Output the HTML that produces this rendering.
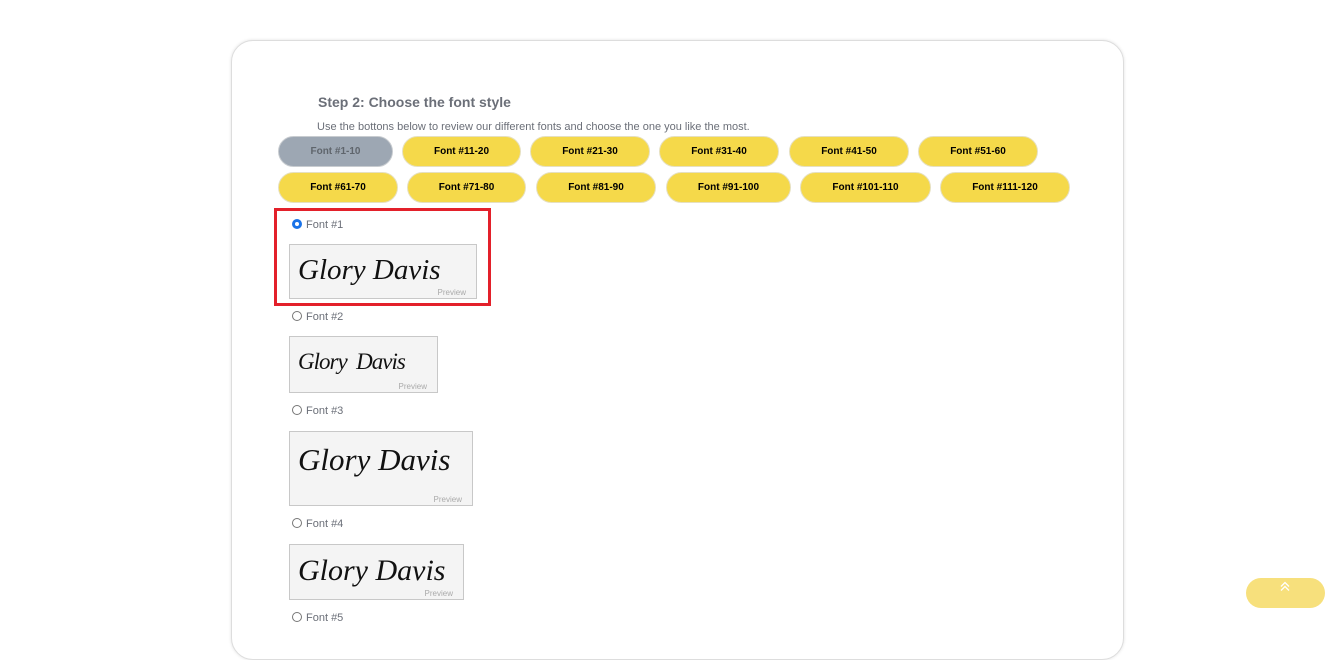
<!DOCTYPE html>
<html><head><meta charset="utf-8"><style>
*{margin:0;padding:0;box-sizing:border-box}
body{width:1335px;height:626px;background:#fff;font-family:"Liberation Sans",Arial,sans-serif;position:relative;overflow:hidden}
.card{position:absolute;left:231px;top:40px;width:893px;height:620px;border:1px solid #ddd;border-radius:22px;box-shadow:0 0 3px rgba(0,0,0,.12);background:#fff}
.h{position:absolute;left:318px;top:94px;font-size:14px;font-weight:bold;color:#6b6f78}
.sub{position:absolute;left:317px;top:121px;font-size:11px;color:#6b6f78}
.b{position:absolute;height:31px;border-radius:16px;background:#f5d94a;border:1px solid #e6e0c0;font-size:10px;font-weight:bold;color:#000;display:flex;align-items:center;justify-content:center}
.b.g{background:#9da7b3;color:#5f656c;border-color:#c8ccd0}
.sel{position:absolute;left:274px;top:208px;width:217px;height:98px;border:3px solid #e3202a}
.lab{position:absolute;left:292px;font-size:11px;color:#6b6f78;display:flex;align-items:center}
.r{width:10px;height:10px;border:1px solid #767676;border-radius:50%;margin-right:4px;background:#fff;margin-top:-3px}
.r.on{border:3px solid #1a73e8}
.pv{position:absolute;left:289px;background:#f4f4f4;border:1px solid #c8c8c8;overflow:hidden}
.pv span.t{position:absolute;left:8px;font-family:"Liberation Serif",serif;font-style:italic;color:#111;white-space:nowrap}
.pv span.p{position:absolute;right:10px;bottom:1px;font-size:8px;color:#aaa}
.top{position:absolute;left:1246px;top:578px;width:79px;height:30px;border-radius:15px;background:#f7e07c}
</style></head><body>
<div class="card"></div>
<div class="h">Step 2: Choose the font style</div>
<div class="sub">Use the bottons below to review our different fonts and choose the one you like the most.</div>
<div class="b g" style="left:278px;top:136px;width:115px">Font #1-10</div>
<div class="b" style="left:402px;top:136px;width:119px">Font #11-20</div>
<div class="b" style="left:530px;top:136px;width:120px">Font #21-30</div>
<div class="b" style="left:659px;top:136px;width:120px">Font #31-40</div>
<div class="b" style="left:789px;top:136px;width:120px">Font #41-50</div>
<div class="b" style="left:918px;top:136px;width:120px">Font #51-60</div>
<div class="b" style="left:278px;top:172px;width:120px">Font #61-70</div>
<div class="b" style="left:407px;top:172px;width:119px">Font #71-80</div>
<div class="b" style="left:536px;top:172px;width:120px">Font #81-90</div>
<div class="b" style="left:666px;top:172px;width:125px">Font #91-100</div>
<div class="b" style="left:800px;top:172px;width:131px">Font #101-110</div>
<div class="b" style="left:940px;top:172px;width:130px">Font #111-120</div>
<div class="sel"></div>
<div class="lab" style="top:219px"><span class="r on"></span>Font #1</div>
<div class="pv" style="top:244px;width:188px;height:55px"><span class="t" style="top:9px;font-size:29px">Glory Davis</span><span class="p">Preview</span></div>
<div class="lab" style="top:311px"><span class="r"></span>Font #2</div>
<div class="pv" style="top:336px;width:149px;height:57px"><span class="t" style="top:12px;font-size:23px;letter-spacing:-1px">Glory&nbsp; Davis</span><span class="p">Preview</span></div>
<div class="lab" style="top:405px"><span class="r"></span>Font #3</div>
<div class="pv" style="top:431px;width:184px;height:75px"><span class="t" style="top:10px;font-size:31px">Glory Davis</span><span class="p">Preview</span></div>
<div class="lab" style="top:518px"><span class="r"></span>Font #4</div>
<div class="pv" style="top:544px;width:175px;height:56px"><span class="t" style="top:9px;font-size:30px">Glory Davis</span><span class="p">Preview</span></div>
<div class="lab" style="top:612px"><span class="r"></span>Font #5</div>
<div class="top"><svg width="79" height="30"><path d="M35 8.5l4-4 4 4M35 12.5l4-4 4 4" fill="none" stroke="#fff" stroke-width="1.3"/></svg></div>
</body></html>
